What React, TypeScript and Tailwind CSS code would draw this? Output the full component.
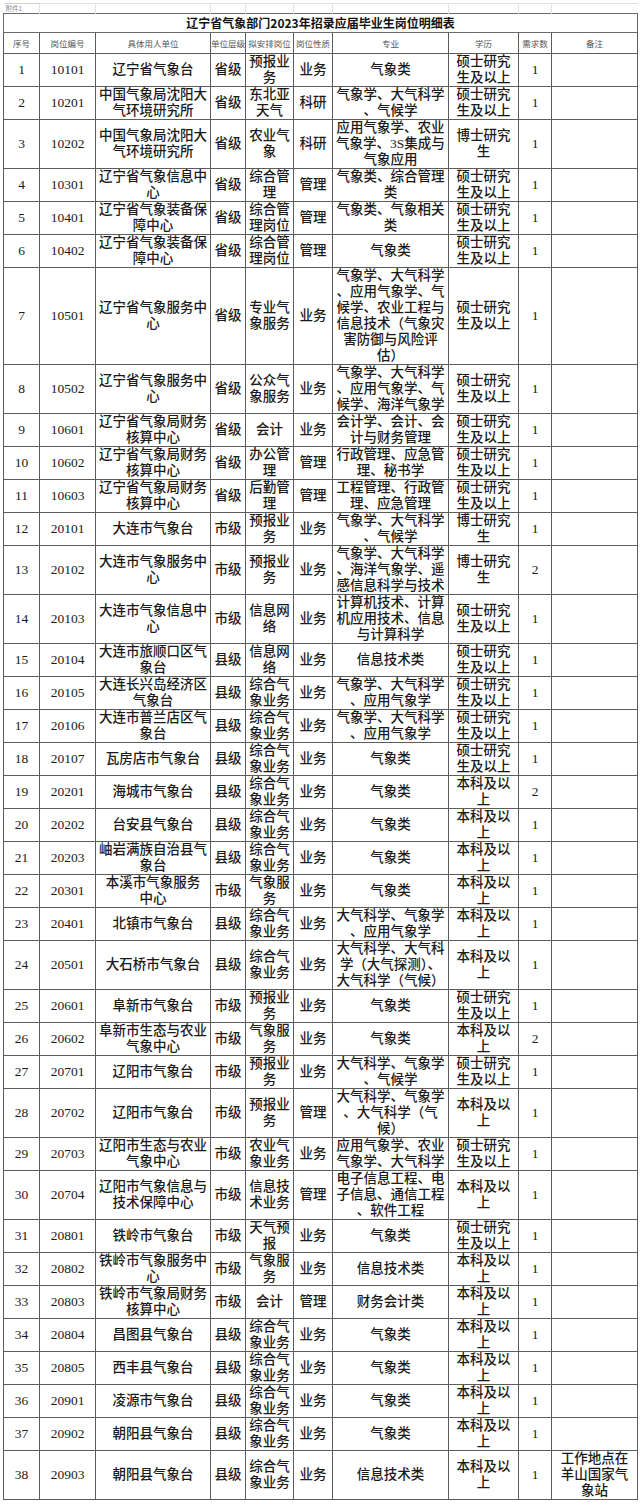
const l = (s: string) => s.split('|')

type Row = {
  no: number
  code: string
  unit: string[]
  level: string
  post: string[]
  kind: string
  major: string[]
  edu: string[]
  num: number
  note?: string[]
}

const MS = l('硕士研究|生及以上')
const PHD = l('博士研究|生')
const BK = l('本科及以|上')
const ZH = l('综合气|象业务')
const YB = l('预报业|务')

const rows: Row[] = [
  { no: 1, code: '10101', unit: l('辽宁省气象台'), level: '省级', post: YB, kind: '业务', major: l('气象类'), edu: MS, num: 1 },
  { no: 2, code: '10201', unit: l('中国气象局沈阳大|气环境研究所'), level: '省级', post: l('东北亚|天气'), kind: '科研', major: l('气象学、大气科学|、气候学'), edu: MS, num: 1 },
  { no: 3, code: '10202', unit: l('中国气象局沈阳大|气环境研究所'), level: '省级', post: l('农业气|象'), kind: '科研', major: l('应用气象学、农业|气象学、3S集成与|气象应用'), edu: PHD, num: 1 },
  { no: 4, code: '10301', unit: l('辽宁省气象信息中|心'), level: '省级', post: l('综合管|理'), kind: '管理', major: l('气象类、综合管理|类'), edu: MS, num: 1 },
  { no: 5, code: '10401', unit: l('辽宁省气象装备保|障中心'), level: '省级', post: l('综合管|理岗位'), kind: '管理', major: l('气象类、气象相关|类'), edu: MS, num: 1 },
  { no: 6, code: '10402', unit: l('辽宁省气象装备保|障中心'), level: '省级', post: l('综合管|理岗位'), kind: '管理', major: l('气象类'), edu: MS, num: 1 },
  { no: 7, code: '10501', unit: l('辽宁省气象服务中|心'), level: '省级', post: l('专业气|象服务'), kind: '业务', major: l('气象学、大气科学|、应用气象学、气|候学、农业工程与|信息技术（气象灾|害防御与风险评|估）'), edu: MS, num: 1 },
  { no: 8, code: '10502', unit: l('辽宁省气象服务中|心'), level: '省级', post: l('公众气|象服务'), kind: '业务', major: l('气象学、大气科学|、应用气象学、气|候学、海洋气象学'), edu: MS, num: 1 },
  { no: 9, code: '10601', unit: l('辽宁省气象局财务|核算中心'), level: '省级', post: l('会计'), kind: '业务', major: l('会计学、会计、会|计与财务管理'), edu: MS, num: 1 },
  { no: 10, code: '10602', unit: l('辽宁省气象局财务|核算中心'), level: '省级', post: l('办公管|理'), kind: '管理', major: l('行政管理、应急管|理、秘书学'), edu: MS, num: 1 },
  { no: 11, code: '10603', unit: l('辽宁省气象局财务|核算中心'), level: '省级', post: l('后勤管|理'), kind: '管理', major: l('工程管理、行政管|理、应急管理'), edu: MS, num: 1 },
  { no: 12, code: '20101', unit: l('大连市气象台'), level: '市级', post: YB, kind: '业务', major: l('气象学、大气科学|、气候学'), edu: PHD, num: 1 },
  { no: 13, code: '20102', unit: l('大连市气象服务中|心'), level: '市级', post: YB, kind: '业务', major: l('气象学、大气科学|、海洋气象学、遥|感信息科学与技术'), edu: PHD, num: 2 },
  { no: 14, code: '20103', unit: l('大连市气象信息中|心'), level: '市级', post: l('信息网|络'), kind: '业务', major: l('计算机技术、计算|机应用技术、信息|与计算科学'), edu: MS, num: 1 },
  { no: 15, code: '20104', unit: l('大连市旅顺口区气|象台'), level: '县级', post: l('信息网|络'), kind: '业务', major: l('信息技术类'), edu: MS, num: 1 },
  { no: 16, code: '20105', unit: l('大连长兴岛经济区|气象台'), level: '县级', post: ZH, kind: '业务', major: l('气象学、大气科学|、应用气象学'), edu: MS, num: 1 },
  { no: 17, code: '20106', unit: l('大连市普兰店区气|象台'), level: '县级', post: ZH, kind: '业务', major: l('气象学、大气科学|、应用气象学'), edu: MS, num: 1 },
  { no: 18, code: '20107', unit: l('瓦房店市气象台'), level: '县级', post: ZH, kind: '业务', major: l('气象类'), edu: MS, num: 1 },
  { no: 19, code: '20201', unit: l('海城市气象台'), level: '县级', post: ZH, kind: '业务', major: l('气象类'), edu: BK, num: 2 },
  { no: 20, code: '20202', unit: l('台安县气象台'), level: '县级', post: ZH, kind: '业务', major: l('气象类'), edu: BK, num: 1 },
  { no: 21, code: '20203', unit: l('岫岩满族自治县气|象台'), level: '县级', post: ZH, kind: '业务', major: l('气象类'), edu: BK, num: 1 },
  { no: 22, code: '20301', unit: l('本溪市气象服务|中心'), level: '市级', post: l('气象服|务'), kind: '业务', major: l('气象类'), edu: BK, num: 1 },
  { no: 23, code: '20401', unit: l('北镇市气象台'), level: '县级', post: ZH, kind: '业务', major: l('大气科学、气象学|、应用气象学'), edu: BK, num: 1 },
  { no: 24, code: '20501', unit: l('大石桥市气象台'), level: '县级', post: ZH, kind: '业务', major: l('大气科学、大气科|学（大气探测）、|大气科学（气候）'), edu: BK, num: 1 },
  { no: 25, code: '20601', unit: l('阜新市气象台'), level: '市级', post: YB, kind: '业务', major: l('气象类'), edu: MS, num: 1 },
  { no: 26, code: '20602', unit: l('阜新市生态与农业|气象中心'), level: '市级', post: l('气象服|务'), kind: '业务', major: l('气象类'), edu: BK, num: 2 },
  { no: 27, code: '20701', unit: l('辽阳市气象台'), level: '市级', post: YB, kind: '业务', major: l('大气科学、气象学|、气候学'), edu: MS, num: 1 },
  { no: 28, code: '20702', unit: l('辽阳市气象台'), level: '市级', post: YB, kind: '管理', major: l('大气科学、气象学|、大气科学（气|候）'), edu: BK, num: 1 },
  { no: 29, code: '20703', unit: l('辽阳市生态与农业|气象中心'), level: '市级', post: l('农业气|象业务'), kind: '业务', major: l('应用气象学、农业|气象学、大气科学'), edu: MS, num: 1 },
  { no: 30, code: '20704', unit: l('辽阳市气象信息与|技术保障中心'), level: '市级', post: l('信息技|术业务'), kind: '管理', major: l('电子信息工程、电|子信息、通信工程|、软件工程'), edu: BK, num: 1 },
  { no: 31, code: '20801', unit: l('铁岭市气象台'), level: '市级', post: l('天气预|报'), kind: '业务', major: l('气象类'), edu: MS, num: 1 },
  { no: 32, code: '20802', unit: l('铁岭市气象服务中|心'), level: '市级', post: l('气象服|务'), kind: '业务', major: l('信息技术类'), edu: BK, num: 1 },
  { no: 33, code: '20803', unit: l('铁岭市气象局财务|核算中心'), level: '市级', post: l('会计'), kind: '管理', major: l('财务会计类'), edu: BK, num: 1 },
  { no: 34, code: '20804', unit: l('昌图县气象台'), level: '县级', post: ZH, kind: '业务', major: l('气象类'), edu: BK, num: 1 },
  { no: 35, code: '20805', unit: l('西丰县气象台'), level: '县级', post: ZH, kind: '业务', major: l('气象类'), edu: BK, num: 1 },
  { no: 36, code: '20901', unit: l('凌源市气象台'), level: '县级', post: ZH, kind: '业务', major: l('气象类'), edu: BK, num: 1 },
  { no: 37, code: '20902', unit: l('朝阳县气象台'), level: '县级', post: ZH, kind: '业务', major: l('气象类'), edu: BK, num: 1 },
  { no: 38, code: '20903', unit: l('朝阳县气象台'), level: '县级', post: ZH, kind: '业务', major: l('信息技术类'), edu: BK, num: 1, note: l('工作地点在|羊山国家气|象站') },
]

const widths = [36, 56, 115, 35, 48, 39, 116, 70, 33, 86]
const headers = ['序号', '岗位编号', '具体用人单位', '单位层级', '拟安排岗位', '岗位性质', '专业', '学历', '需求数', '备注']

function Lines({ lines }: { lines: string[] }) {
  return (
    <>
      {lines.map((t, i) => (
        <div key={i} className="whitespace-nowrap">
          {t}
        </div>
      ))}
    </>
  )
}

const td = 'border border-[#5c5c5c] p-0 text-center align-middle'

export default function App() {
  return (
    <div className="min-h-[1507px] bg-white pt-[3px] font-['Liberation_Serif','Noto_Sans_CJK_SC',serif] text-[#1a1a1a]">
      <table className="ml-[3px] w-[634px] table-fixed border-collapse">
        <colgroup>
          {widths.map((w, i) => (
            <col key={i} style={{ width: w }} />
          ))}
        </colgroup>
        <tbody>
          <tr className="h-[10px]">
            <td className="border-t border-[#cfcfcf] p-0 pl-[2px] text-left align-top text-[6.5px] leading-[9px] text-[#8a8a8a] font-['Noto_Sans_CJK_SC',sans-serif]">
              附件1
            </td>
            {widths.slice(1).map((_, i) => (
              <td key={i} className="border-l border-t border-[#e2e2e2] p-0" />
            ))}
          </tr>
          <tr className="h-[19px]">
            <td
              colSpan={10}
              className="border border-[#6a6a6a] p-0 text-center align-middle text-[12px] font-bold leading-[18px] text-[#111] font-['Noto_Sans_CJK_SC',sans-serif]"
            >
              辽宁省气象部门2023年招录应届毕业生岗位明细表
            </td>
          </tr>
          <tr className="h-[21px]">
            {headers.map((h) => (
              <td key={h} className={`${td} text-[8.5px] leading-[20px] text-[#555] font-['Noto_Sans_CJK_SC',sans-serif]`}>
                {h}
              </td>
            ))}
          </tr>
          {rows.map((r) => (
            <tr key={r.no} className="text-[13.5px] font-medium leading-[16px]">
              <td className={`${td} text-[13.5px]`}>{r.no}</td>
              <td className={`${td} text-[13.5px]`}>{r.code}</td>
              <td className={td}>
                <Lines lines={r.unit} />
              </td>
              <td className={td}>{r.level}</td>
              <td className={td}>
                <Lines lines={r.post} />
              </td>
              <td className={td}>{r.kind}</td>
              <td className={td}>
                <Lines lines={r.major} />
              </td>
              <td className={td}>
                <Lines lines={r.edu} />
              </td>
              <td className={`${td} text-[13.5px]`}>{r.num}</td>
              <td className={td}>{r.note && <Lines lines={r.note} />}</td>
            </tr>
          ))}
        </tbody>
      </table>
    </div>
  )
}
